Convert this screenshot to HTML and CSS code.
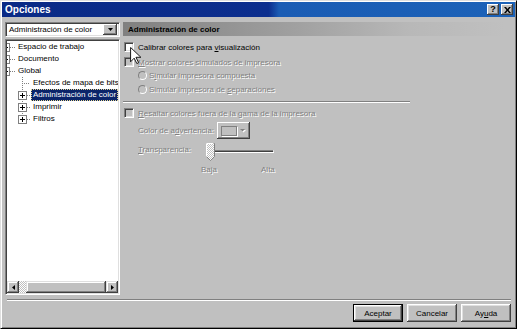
FILE: index.html
```html
<!DOCTYPE html>
<html lang="es">
<head>
    <meta charset="UTF-8">
    <meta name="viewport" content="width=device-width, initial-scale=1.0">
    <title>Opciones</title>
    <link rel="stylesheet" href="styles.css">
</head>
<body>
    <div class="window">
        <div class="titlebar">
            <span class="title">Opciones</span>
            <div class="title-buttons">
                <span class="tb-btn help">?</span>
                <span class="tb-btn">
                    <svg width="7" height="6" viewBox="0 0 7 6"><path d="M0 0h2l1.5 2L5 0h2L4.5 3 7 6H5L3.5 4 2 6H0l2.5-3z" fill="#000"/></svg>
                </span>
            </div>
        </div>

        <div class="main">
            <div class="left">
                <div class="combo">
                    <span class="combo-text">Administración de color</span>
                    <span class="combo-arrow">
                        <svg width="5" height="3" viewBox="0 0 5 3"><path d="M0 0h5L2.5 3z" fill="#000"/></svg>
                    </span>
                </div>
                <div class="tree">
                    <ul class="tree-list">
                        <li class="node root"><span class="exp plus"></span><span class="branch"></span><span class="label">Espacio de trabajo</span></li>
                        <li class="node root"><span class="exp plus"></span><span class="branch"></span><span class="label">Documento</span></li>
                        <li class="node root"><span class="exp minus"></span><span class="branch"></span><span class="label">Global</span></li>
                        <li class="node child leaf"><span class="branch long"></span><span class="label">Efectos de mapa de bits</span></li>
                        <li class="node child"><span class="exp plus"></span><span class="branch"></span><span class="label selected">Administración de color</span></li>
                        <li class="node child"><span class="exp plus"></span><span class="branch"></span><span class="label">Imprimir</span></li>
                        <li class="node child last"><span class="exp plus"></span><span class="branch"></span><span class="label">Filtros</span></li>
                    </ul>
                    <div class="hscroll">
                        <span class="sb-btn">
                            <svg width="3" height="5" viewBox="0 0 3 5"><path d="M3 0v5L0 2.5z" fill="#000"/></svg>
                        </span>
                        <span class="sb-trough"></span>
                        <span class="sb-thumb"></span>
                        <span class="sb-btn">
                            <svg width="3" height="5" viewBox="0 0 3 5"><path d="M0 0v5l3-2.5z" fill="#000"/></svg>
                        </span>
                    </div>
                </div>
            </div>

            <div class="right">
                <div class="page-header">Administración de color</div>
                <div class="options">
                    <div class="check-row r1">
                        <span class="checkbox"></span>
                        <span>Calibrar colores para <u>v</u>isualización</span>
                    </div>
                    <div class="check-row r2 disabled">
                        <span class="checkbox off"></span>
                        <span><u>M</u>ostrar colores simulados de impresora</span>
                    </div>
                    <div class="radio-row r3 disabled">
                        <span class="radio"></span>
                        <span>S<u>i</u>mular impresora compuesta</span>
                    </div>
                    <div class="radio-row r4 disabled">
                        <span class="radio"></span>
                        <span>Simular impresora de <u>s</u>eparaciones</span>
                    </div>
                    <div class="sep"></div>
                    <div class="check-row r5 disabled">
                        <span class="checkbox off"></span>
                        <span><u>R</u>esaltar colores fuera de la gama de la impresora</span>
                    </div>
                    <div class="sub-row color-row disabled">
                        <span class="sub-label color-label">Color de a<u>d</u>vertencia:</span>
                        <span class="color-btn">
                            <span class="swatch"></span>
                            <svg width="6" height="4" viewBox="0 0 6 4"><path d="M1 1h5L3.5 3.5z" fill="#fff"/><path d="M0 0h5L2.5 2.5z" fill="#808080"/></svg>
                        </span>
                    </div>
                    <div class="sub-row slider-row disabled">
                        <span class="sub-label slider-label"><u>T</u>ransparencia:</span>
                        <svg class="slider" width="68" height="19" viewBox="0 0 68 19">
                            <defs>
                                <pattern id="dither" width="2" height="2" patternUnits="userSpaceOnUse">
                                    <rect width="2" height="2" fill="#c0c0c0"/>
                                    <rect width="1" height="1" fill="#fff"/>
                                    <rect x="1" y="1" width="1" height="1" fill="#fff"/>
                                </pattern>
                            </defs>
                            <rect x="0" y="7" width="67" height="1" fill="#808080"/>
                            <rect x="0" y="8" width="67" height="1" fill="#404040"/>
                            <rect x="0" y="9" width="68" height="1" fill="#fff"/>
                            <rect x="67" y="7" width="1" height="2" fill="#dfdfdf"/>
                            <path d="M0.5 0.5h8v13l-4 4-4-4z" fill="url(#dither)" stroke="#808080"/>
                            <path d="M0.5 13.5v-13h7" fill="none" stroke="#fff"/>
                        </svg>
                    </div>
                    <div class="scale-row disabled">
                        <span>Baja</span>
                        <span class="alta">Alta</span>
                    </div>
                </div>
            </div>
        </div>

        <div class="footer">
            <div class="footer-sep"></div>
            <div class="buttons">
                <button class="btn default">Aceptar</button>
                <button class="btn">Cancelar</button>
                <button class="btn">Ay<u>u</u>da</button>
            </div>
        </div>

        <svg class="cursor" width="11" height="17" viewBox="0 0 12 19">
            <path d="M0.5 0.5v16l4-4 3 6 2-1-3-6h5.5z" fill="#fff" stroke="#000"/>
        </svg>
    </div>
</body>
</html>
```

FILE: styles.css
```css
body {
    margin: 0;
    font-family: "Liberation Sans", Arial, sans-serif;
    font-size: 8px;
    color: #000;
    background-color: #c0c0c0;
}
.window {
    position: relative;
    width: 517px;
    height: 329px;
    box-sizing: border-box;
    display: flex;
    flex-direction: column;
    padding: 1px;
    background-color: #c0c0c0;
    border: 1px solid;
    border-color: #dfdfdf #000 #000 #dfdfdf;
    box-shadow: inset 1px 1px #fff, inset -1px -1px #808080;
}
.titlebar {
    height: 15px;
    display: flex;
    align-items: center;
    justify-content: space-between;
    padding: 0 2px 0 3px;
    background: linear-gradient(to right, #0a2a86 0%, #0c2e8e 52%, #1a5cb4 54%, #1c62b8 100%);
}
.title {
    color: #fff;
    font-weight: bold;
    font-size: 10px;
}
.title-buttons {
    display: flex;
    gap: 2px;
}
.tb-btn {
    width: 12px;
    height: 11px;
    box-sizing: border-box;
    display: flex;
    align-items: center;
    justify-content: center;
    background-color: #c0c0c0;
    box-shadow: inset -1px -1px #404040, inset 1px 1px #fff, inset -2px -2px #808080;
}
.tb-btn.help {
    font-weight: bold;
    font-size: 9px;
    line-height: 11px;
}
.main {
    flex: 1;
    min-height: 0;
    display: flex;
    padding: 5px 10px 0 3px;
}
.left {
    width: 115px;
    display: flex;
    flex-direction: column;
}
.combo {
    height: 15px;
    box-sizing: border-box;
    display: flex;
    align-items: center;
    padding: 2px;
    background-color: #fff;
    border: 1px solid;
    border-color: #808080 #fff #fff #808080;
    box-shadow: inset 1px 1px #404040, inset -1px -1px #dfdfdf;
}
.combo-text {
    flex: 1;
    padding-left: 1px;
    white-space: nowrap;
    overflow: hidden;
}
.combo-arrow {
    width: 14px;
    height: 11px;
    display: flex;
    align-items: center;
    justify-content: center;
    background-color: #c0c0c0;
    box-shadow: inset -1px -1px #404040, inset 1px 1px #fff, inset -2px -2px #808080;
}
.tree {
    flex: 1;
    margin-top: 2px;
    display: flex;
    flex-direction: column;
    overflow: hidden;
    background-color: #fff;
    border: 1px solid;
    border-color: #808080 #fff #fff #808080;
    box-shadow: inset 1px 1px #404040, inset -1px -1px #dfdfdf;
    padding: 1px;
}
.tree-list {
    flex: 1;
    list-style: none;
    margin: 0;
    padding: 0;
    overflow: hidden;
}
.node {
    height: 12px;
    display: flex;
    align-items: center;
    white-space: nowrap;
}
.node.child {
    padding-left: 11px;
    background: repeating-linear-gradient(to bottom, #808080 0 1px, transparent 1px 2px) 15px 0 / 1px 100% no-repeat;
}
.node.child.last {
    background-size: 1px 50%;
}
.node.leaf {
    padding-left: 15px;
}
.exp {
    flex: none;
    width: 9px;
    height: 9px;
    box-sizing: border-box;
    border: 1px solid #808080;
    background: linear-gradient(#000, #000) center / 5px 1px no-repeat, #fff;
}
.exp.plus {
    background: linear-gradient(#000, #000) center / 5px 1px no-repeat,
                linear-gradient(#000, #000) center / 1px 5px no-repeat, #fff;
}
.root .exp {
    margin-left: -6px;
}
.branch {
    flex: none;
    width: 3px;
    height: 1px;
    background: repeating-linear-gradient(to right, #808080 0 1px, transparent 1px 2px);
}
.root .branch {
    width: 5px;
}
.branch.long {
    width: 8px;
}
.label {
    margin-left: 1px;
    padding: 0 1px;
    line-height: 10px;
    border: 1px solid transparent;
}
.label.selected {
    background-color: #0a246a;
    color: #fff;
    border: 1px dotted #e8d890;
}
.hscroll {
    height: 12px;
    display: flex;
}
.sb-btn {
    width: 12px;
    display: flex;
    align-items: center;
    justify-content: center;
    background-color: #c0c0c0;
    box-shadow: inset -1px -1px #404040, inset 1px 1px #dfdfdf, inset -2px -2px #808080, inset 2px 2px #fff;
}
.sb-trough {
    width: 7px;
    background: repeating-conic-gradient(#fff 0 25%, #c0c0c0 0 50%) 0 0 / 2px 2px;
}
.sb-thumb {
    flex: 1;
    background-color: #c0c0c0;
    box-shadow: inset -1px -1px #404040, inset 1px 1px #dfdfdf, inset -2px -2px #808080, inset 2px 2px #fff;
}
.right {
    flex: 1;
    margin-left: 3px;
    display: flex;
    flex-direction: column;
}
.page-header {
    height: 14px;
    display: flex;
    align-items: center;
    padding-left: 5px;
    font-weight: bold;
    background: linear-gradient(to right, #808080, #a0a0a0 45%, #b8b8b8 75%, #c0c0c0);
}
.options {
    padding: 4px 0 0 1px;
    display: flex;
    flex-direction: column;
}
.disabled {
    color: #808080;
    text-shadow: 1px 1px 0 #fff;
}
.check-row {
    height: 14px;
    display: flex;
    align-items: center;
    gap: 4px;
    white-space: nowrap;
}
.r2 { margin-top: 1px; }
.r3 { margin-top: -1px; }
.r5 { margin-top: 3px; }
.checkbox {
    width: 10px;
    height: 10px;
    box-sizing: border-box;
    background-color: #fff;
    border: 1px solid;
    border-color: #808080 #fff #fff #808080;
    box-shadow: inset 1px 1px #404040, inset -1px -1px #dfdfdf;
}
.checkbox.off {
    background-color: #c0c0c0;
}
.radio-row {
    height: 14px;
    display: flex;
    align-items: center;
    gap: 2px;
    padding-left: 14px;
    white-space: nowrap;
}
.radio {
    width: 9px;
    height: 9px;
    box-sizing: border-box;
    border-radius: 50%;
    background-color: #c0c0c0;
    border: 1px solid;
    border-color: #808080 #fff #fff #808080;
}
.sep {
    width: 287px;
    margin: 5px 0 0 -1px;
    border-top: 1px solid #808080;
    border-bottom: 1px solid #fff;
}
.sub-row {
    display: flex;
    align-items: center;
    padding-left: 14px;
    white-space: nowrap;
}
.color-row {
    height: 17px;
    margin-top: 2px;
}
.color-label {
    width: 79px;
}
.color-btn {
    width: 33px;
    height: 17px;
    box-sizing: border-box;
    display: flex;
    align-items: center;
    gap: 3px;
    padding-left: 4px;
    background-color: #c0c0c0;
    box-shadow: inset -1px -1px #404040, inset 1px 1px #fff, inset -2px -2px #808080;
}
.swatch {
    width: 16px;
    height: 10px;
    box-sizing: border-box;
    border: 1px solid #808080;
    box-shadow: 1px 1px #fff;
}
.slider-row {
    height: 19px;
    margin-top: 4px;
    align-items: flex-start;
}
.slider-label {
    width: 68px;
    line-height: 14px;
}
.scale-row {
    height: 12px;
    margin-top: 1px;
    padding-left: 77px;
    display: flex;
    align-items: center;
}
.alta {
    margin-left: 44px;
}
.footer {
    padding: 4px 4px 5px 5px;
}
.footer-sep {
    border-top: 1px solid #808080;
    border-bottom: 1px solid #fff;
}
.buttons {
    display: flex;
    justify-content: flex-end;
    gap: 4px;
    margin-top: 3px;
}
.btn {
    width: 50px;
    height: 18px;
    box-sizing: border-box;
    padding: 0;
    border: none;
    font: inherit;
    color: #000;
    background-color: #c0c0c0;
    box-shadow: inset -1px -1px #404040, inset 1px 1px #fff, inset -2px -2px #808080, inset 2px 2px #dfdfdf;
}
.btn.default {
    border: 1px solid #000;
}
.cursor {
    position: absolute;
    left: 129px;
    top: 46px;
}
```
